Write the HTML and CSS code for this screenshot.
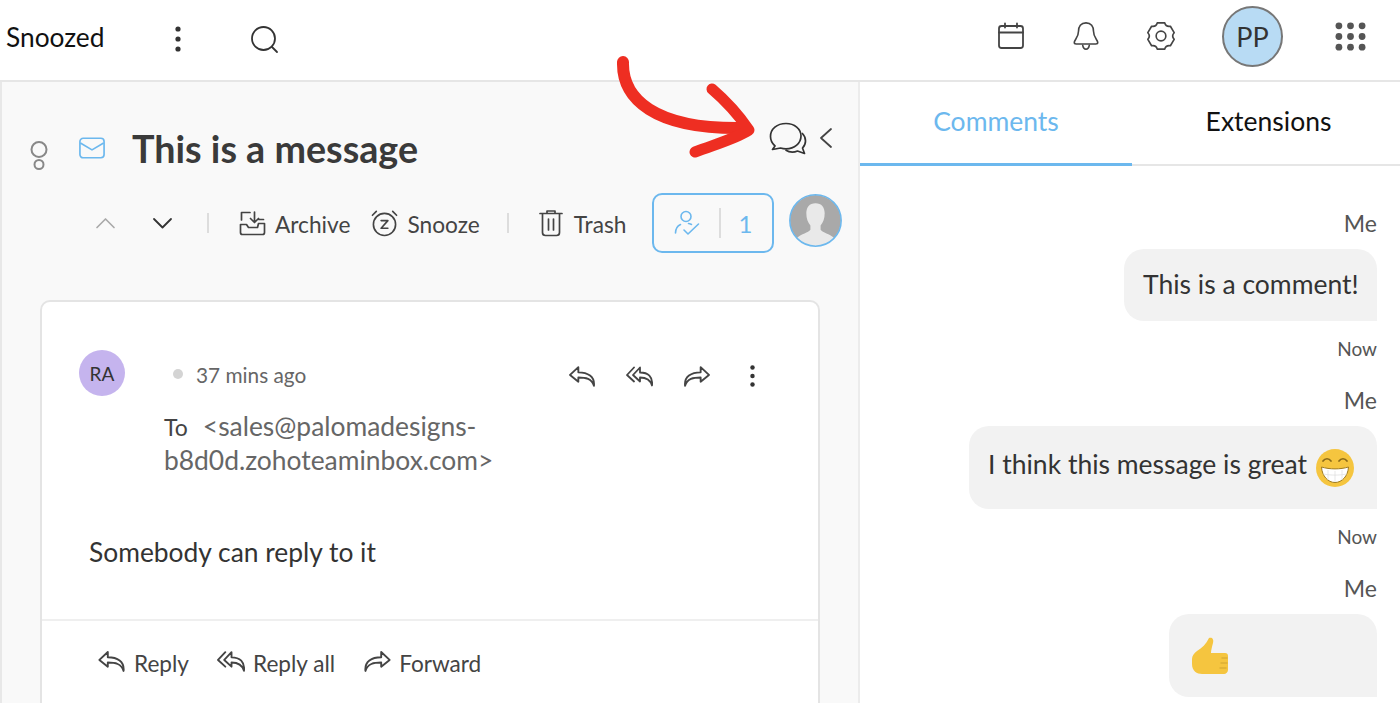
FILE: index.html
```html
<!DOCTYPE html>
<html lang="en">
<head>
<meta charset="utf-8">
<title>Snoozed</title>
<link rel="stylesheet" href="styles.css">
</head>
<body>
<div class="app">
  <header class="topbar">
    <div class="topbar-left">
      <span class="folder">Snoozed</span>
      <svg class="ic-dots" viewBox="0 0 8 28"><circle cx="4" cy="4" r="2.6"/><circle cx="4" cy="14" r="2.6"/><circle cx="4" cy="24" r="2.6"/></svg>
      <svg class="ic-search" viewBox="0 0 28 28" fill="none" stroke="#333" stroke-width="1.8" stroke-linecap="round"><circle cx="12.5" cy="12.5" r="11.5"/><path d="M21 21l5 5"/></svg>
    </div>
    <div class="topbar-right">
      <svg class="ic-top" viewBox="0 0 28 28" fill="none" stroke="#444" stroke-width="1.8" stroke-linecap="round" stroke-linejoin="round"><rect x="2" y="4" width="24" height="22" rx="2.5"/><path d="M2 10.5h24M8 1.5v4M20 1.5v4"/></svg>
      <svg class="ic-top" viewBox="0 0 28 32" fill="none" stroke="#444" stroke-width="1.7" stroke-linecap="round" stroke-linejoin="round"><path d="M14 2c-5.500 0-8 4-8 9 0 7-4.500 9-4.500 12 0 1 .8 1.500 2 1.500h21c1.200 0 2-.5 2-1.500 0-3-4.500-5-4.500-12 0-5-2.500-9-8-9z"/><path d="M10.500 26c.5 3 2 4 3.500 4s3-1 3.500-4"/></svg>
      <svg class="ic-top" viewBox="1 0 28 31" fill="none" stroke="#444" stroke-width="1.7" stroke-linejoin="round"><path d="M11.100 2L18.900 2Q20 6.200 24.700 5.400L28.600 12.100Q25.500 15.500 28.600 18.900L24.700 25.600Q20 24.800 18.900 29L11.100 29Q10 24.800 5.300 25.600L1.400 18.900Q4.500 15.500 1.400 12.100L5.300 5.400Q10 6.200 11.100 2Z"/><circle cx="15" cy="15.500" r="5"/></svg>
      <div class="avatar-pp">PP</div>
      <svg class="ic-grid" viewBox="0 0 32 30"><circle cx="4" cy="4" r="3.500"/><circle cx="16" cy="4" r="3.500"/><circle cx="28" cy="4" r="3.500"/><circle cx="4" cy="15" r="3.500"/><circle cx="16" cy="15" r="3.500"/><circle cx="28" cy="15" r="3.500"/><circle cx="4" cy="26" r="3.500"/><circle cx="16" cy="26" r="3.500"/><circle cx="28" cy="26" r="3.500"/></svg>
    </div>
  </header>

  <main class="panes">
    <section class="thread">
      <div class="title-row">
        <svg class="ic-bulb" viewBox="0 0 18 30" fill="none" stroke="#888" stroke-width="2"><circle cx="9" cy="9.500" r="7.500"/><circle cx="9" cy="24.500" r="4.500"/></svg>
        <svg class="ic-mail" viewBox="0 0 28 24" fill="none" stroke="#6cb8ee" stroke-width="1.800" stroke-linejoin="round"><rect x="1" y="1" width="26" height="21" rx="3.500"/><path d="M1.500 6l12.500 7.500L26.500 6"/></svg>
        <h1 class="subject">This is a message</h1>
        <svg class="ic-chat" viewBox="0 0 38 36" fill="none" stroke="#333" stroke-width="1.700" stroke-linejoin="round"><path d="M17 1.500C8 1.500 1.500 7 1.500 14.500c0 4 1.700 7 4.500 9.500l-2.500 3.500 8-1.500c1.700.5 3.500.8 5.500.8 8.500 0 15-5.600 15-12.800S25.500 1.500 17 1.500z"/><path d="M33 11c2.500 2.500 3.500 5 3.500 8 0 3-1 5-3 7l2 5.500-7-2.500c-3.500 1.500-8 1.500-12-1"/></svg>
        <svg class="ic-back" viewBox="0 0 14 22" fill="none" stroke="#444" stroke-width="1.800" stroke-linecap="round" stroke-linejoin="round"><path d="M12 2L2 11l10 9"/></svg>
      </div>

      <div class="toolbar">
        <svg class="ic-chev dim" viewBox="0 0 20 12" fill="none" stroke-width="1.700" stroke-linecap="round" stroke-linejoin="round"><path d="M1.500 10.500L10 2l8.500 8.500"/></svg>
        <svg class="ic-chev" viewBox="0 0 20 12" fill="none" stroke-width="1.800" stroke-linecap="round" stroke-linejoin="round"><path d="M1.500 2L10 10.500 18.500 2"/></svg>
        <span class="tb-sep first"></span>
        <div class="tb-item archive">
          <svg class="ic-tb wide" viewBox="0 0 27 26" fill="none" stroke="#444" stroke-width="1.700" stroke-linecap="round" stroke-linejoin="round"><path d="M1.500 14.500v8c0 1.200.8 2 2 2h20c1.200 0 2-.8 2-2v-9h-6M1.500 14.500h6l2 3h9l1-4"/><path d="M2.500 10V2.500h8.500M15.500 2v10M11.500 8.500l4 4 4-4M20 9.500h4.500"/></svg>
          <span>Archive</span>
        </div>
        <div class="tb-item snooze">
          <svg class="ic-tb wide" viewBox="0 0 28 28" fill="none" stroke="#444" stroke-width="1.700" stroke-linecap="round" stroke-linejoin="round"><circle cx="14" cy="15.500" r="11.500"/><path d="M10.500 11.500h7l-7 8h7M1.500 6l4-4M26.500 6l-4-4"/></svg>
          <span>Snooze</span>
        </div>
        <span class="tb-sep second"></span>
        <div class="tb-item trash">
          <svg class="ic-tb" viewBox="0 0 24 28" fill="none" stroke="#444" stroke-width="1.700" stroke-linecap="round" stroke-linejoin="round"><path d="M1 4.500h22M8 4.500V2h8v2.500M3.500 4.500v19c0 2 1 3 3 3h11c2 0 3-1 3-3v-19M9.500 10v11M14.500 10v11"/></svg>
          <span>Trash</span>
        </div>
        <div class="assign">
          <svg class="ic-assign" viewBox="0 0 26 26" fill="none" stroke="#6cb8ee" stroke-width="1.600" stroke-linecap="round" stroke-linejoin="round"><circle cx="12" cy="6.500" r="5"/><path d="M1.500 23c0-5 2-7 5-8.500M17.500 14.500c-1-.5-2-1-3-1M10 20l4 4 10.500-10"/></svg>
          <span class="assign-sep"></span>
          <span class="assign-count">1</span>
        </div>
        <svg class="avatar-user" viewBox="0 0 52 52"><circle cx="26" cy="26" r="25" fill="#a9a9a9"/><path d="M26 9c-6 0-9 4-9 10 0 5 1.500 9 4 12v4c-2 3-9 4-13 8 4 5 11 8 18 8s14-3 18-8c-4-4-11-5-13-8v-4c2.500-3 4-7 4-12 0-6-3-10-9-10z" fill="#e9e9e9"/><circle cx="26" cy="26" r="25.200" fill="none" stroke="#6cb8ee" stroke-width="1.500"/></svg>
      </div>

      <article class="card">
        <div class="card-body">
          <div class="avatar-ra">RA</div>
          <div class="meta">
            <div class="meta-top">
              <span class="dot"></span>
              <span class="time">37 mins ago</span>
              <div class="msg-actions">
                <svg class="ic-msg" viewBox="1 1 26 20" fill="none" stroke="#444" stroke-width="1.800" stroke-linecap="round" stroke-linejoin="round"><path d="M10 2L2 9.500 10 16v-4c7 0 13 1 15 8 1-9-6-13-15-13z"/></svg>
                <svg class="ic-msg" viewBox="0 1 27 20" fill="none" stroke="#444" stroke-width="1.800" stroke-linecap="round" stroke-linejoin="round"><path d="M8 2L1 9.500 8 16M14 2L7 9.500 14 16v-4c5 0 10 1 12 8 1-9-4-13-12-13z"/></svg>
                <svg class="ic-msg" viewBox="1 1 26 20" fill="none" stroke="#444" stroke-width="1.800" stroke-linecap="round" stroke-linejoin="round"><path d="M18 2l8 7.500L18 16v-4C11 12 5 13 3 20 2 11 9 7 18 7z"/></svg>
                <svg class="ic-msg-dots" viewBox="0 0 8 28"><circle cx="4" cy="4" r="2.600"/><circle cx="4" cy="14" r="2.600"/><circle cx="4" cy="24" r="2.600"/></svg>
              </div>
            </div>
            <p class="recipients"><span class="to">To</span><span class="addr">&lt;sales@palomadesigns-<br>b8d0d.zohoteaminbox.com&gt;</span></p>
          </div>
        </div>
        <p class="content">Somebody can reply to it</p>
        <div class="card-foot">
          <div class="foot-item">
            <svg class="ic-foot" viewBox="1 1 26 20" fill="none" stroke="#444" stroke-width="1.800" stroke-linecap="round" stroke-linejoin="round"><path d="M10 2L2 9.500 10 16v-4c7 0 13 1 15 8 1-9-6-13-15-13z"/></svg>
            <span>Reply</span>
          </div>
          <div class="foot-item">
            <svg class="ic-foot" viewBox="0 1 27 20" fill="none" stroke="#444" stroke-width="1.800" stroke-linecap="round" stroke-linejoin="round"><path d="M8 2L1 9.500 8 16M14 2L7 9.500 14 16v-4c5 0 10 1 12 8 1-9-4-13-12-13z"/></svg>
            <span>Reply all</span>
          </div>
          <div class="foot-item">
            <svg class="ic-foot" viewBox="1 1 26 20" fill="none" stroke="#444" stroke-width="1.800" stroke-linecap="round" stroke-linejoin="round"><path d="M18 2l8 7.500L18 16v-4C11 12 5 13 3 20 2 11 9 7 18 7z"/></svg>
            <span>Forward</span>
          </div>
        </div>
      </article>
    </section>

    <aside class="side">
      <nav class="tabs">
        <div class="tab active">Comments</div>
        <div class="tab ext">Extensions</div>
      </nav>
      <div class="comments">
        <div class="who">Me</div>
        <div class="bubble b1">This is a comment!</div>
        <div class="when">Now</div>
        <div class="who">Me</div>
        <div class="bubble b2"><span class="b2-text">I think this message is great</span>
          <svg class="emoji" viewBox="0 0 38 38"><circle cx="19" cy="19" r="19" fill="#f5c53f"/><path d="M5.500 18c8 2.500 19 2.500 27 0-.5 9-6.500 15.500-13.500 15.500S6 27 5.500 18z" fill="#fff" stroke="#a07c20" stroke-width="1"/><path d="M12 21v10M19 22v11M26 21v10M7 25c8 1.500 16 1.500 24 0" stroke="#ddd" stroke-width=".7" fill="none"/><path d="M7 12c2-3 6-3 8 0M23 12c2-3 6-3 8 0" fill="none" stroke="#8a6a18" stroke-width="1.700" stroke-linecap="round"/></svg>
        </div>
        <div class="when">Now</div>
        <div class="who">Me</div>
        <div class="bubble b3">
          <svg class="emoji-thumb" viewBox="0 0 36 38"><path d="M17 1c3-1 5 1 4 5-1 4-2 7-2 10h14c2 0 3 1 3 3v14c0 2-2 4-4 4H10C5 37 0 34 0 27v-5c0-3 2-6 5-8 5-3 9-7 12-13z" fill="#f5c53f"/><path d="M35 21h-5M35 26h-6M34 31h-6" stroke="#dcae36" stroke-width="1.500" stroke-linecap="round"/></svg>
        </div>
      </div>
    </aside>
  </main>

  <svg class="annotation" viewBox="0 0 150 110" fill="none" stroke="#ee2e22" stroke-linecap="round" stroke-linejoin="round">
    <path d="M8 6C7 42 38 74 130 72" stroke-width="12"/>
    <path d="M97 33c14 12 26 25 37 41-14 9-33 14-54 22" stroke-width="11"/>
  </svg>
</div>
</body>
</html>
```

FILE: styles.css
```css
* { box-sizing: border-box; }
html, body { margin: 0; padding: 0; }
body { font-family: Lato, "Liberation Sans", sans-serif; color: #333; background: #fff; }
.app { position: relative; width: 1400px; height: 703px; overflow: hidden; display: flex; flex-direction: column; }

.topbar { height: 82px; flex: none; display: flex; align-items: center; justify-content: space-between; border-bottom: 2px solid #e6e6e6; padding: 0 34px 6px 6px; }
.topbar-left, .topbar-right { display: flex; align-items: center; }
.topbar-right { margin-bottom: 2px; }
.folder { font-size: 26.3px; color: #111; width: 168px; }
.ic-dots { width: 8px; height: 28px; fill: #333; margin-top: 4px; }
.ic-search { width: 28px; height: 28px; margin: 6px 0 0 69px; }
.ic-top { width: 28px; height: 30px; margin-right: 47px; }
.avatar-pp { width: 61px; height: 61px; border-radius: 50%; background: #b8dbf4; border: 2px solid #777; margin-right: 52px; display: flex; align-items: center; justify-content: center; font-size: 27px; color: #333; }
.ic-grid { width: 31px; height: 29px; fill: #555; }

.panes { flex: 1; display: flex; min-height: 0; }
.thread { width: 860px; flex: none; background: #f9f9f9; border-left: 2px solid #e8e8e8; border-right: 2px solid #ececec; }
.title-row { display: flex; align-items: center; height: 109px; padding: 24px 0 0 28px; }
.ic-bulb { width: 18px; height: 30px; margin-top: 12px; }
.ic-mail { width: 26px; height: 23px; margin: 0 0 0 31px; }
.subject { margin: 0 0 0 27px; font-size: 37.7px; font-weight: 700; color: #3a3a3a; width: 637px; white-space: nowrap; }
.ic-chat { width: 38px; height: 36px; margin: -18px 0 0 0; }
.ic-back { width: 14px; height: 22px; margin: -22px 0 0 12px; }

.toolbar { display: flex; align-items: center; height: 64px; padding-left: 93px; font-size: 22.7px; color: #444; }
.ic-chev { width: 21px; height: 12px; stroke: #333; margin-right: 36px; }
.ic-chev.dim { stroke: #aaa; }
.tb-sep { width: 2px; height: 20px; background: #ddd; }
.tb-sep.first { margin: 0 30px 0 -2px; }
.tb-sep.second { margin: 0 30px 0 27px; }
.tb-item { display: flex; align-items: center; gap: 9px; white-space: nowrap; }
.tb-item span { padding-top: 2px; }
.trash { gap: 11px; }
.snooze { margin-left: 21px; }
.ic-tb { width: 24px; height: 28px; flex: none; }
.ic-tb.wide { width: 27px; }
.assign { margin-left: 26px; width: 122px; height: 60px; border: 2px solid #6cb8ee; border-radius: 10px; display: flex; align-items: center; padding-left: 20px; color: #6cb8ee; }
.ic-assign { width: 26px; height: 26px; }
.assign-sep { width: 2px; height: 30px; background: #ddd; margin: 0 17px 0 19px; }
.assign-count { font-size: 24px; }
.avatar-user { width: 53px; height: 53px; margin: -6px 0 0 15px; }

.card { margin: 45px 0 0 38px; width: 780px; height: 420px; background: #fff; border: 2px solid #e4e4e4; border-radius: 10px; }
.card-body { display: flex; padding: 48px 0 0 37px; }
.avatar-ra { width: 46px; height: 46px; flex: none; border-radius: 50%; background: #c5b4ee; display: flex; align-items: center; justify-content: center; font-size: 19px; color: #333; }
.meta { margin-left: 39px; flex: 1; }
.meta-top { display: flex; align-items: center; height: 30px; margin-top: 9px; }
.dot { width: 10px; height: 10px; border-radius: 50%; background: #d4d4d4; margin-left: 9px; }
.time { font-size: 20.8px; color: #666; margin-left: 13px; width: 373px; white-space: nowrap; }
.msg-actions { display: flex; align-items: center; gap: 30px; margin-top: 4px; }
.ic-msg { width: 27px; height: 21px; }
.ic-msg-dots { width: 7px; height: 24px; fill: #333; margin: 0 0 0 9px; }
.recipients { margin: 20px 0 0; font-size: 26.4px; line-height: 34px; color: #666; }
.to { font-size: 23px; line-height: 20px; color: #444; margin-right: 15px; }
.content { margin: 57px 0 0 47px; font-size: 26.4px; line-height: 36px; color: #333; }
.card-foot { margin-top: 49px; border-top: 2px solid #efefef; display: flex; align-items: center; padding: 29px 0 0 56px; font-size: 22.6px; color: #444; }
.foot-item { display: flex; align-items: center; gap: 8px; margin-right: 28px; }
.ic-foot { width: 28px; height: 21px; margin-top: -4px; }

.side { flex: 1; min-width: 0; display: flex; flex-direction: column; }
.tabs { display: flex; height: 84px; border-bottom: 2px solid #e6e6e6; font-size: 26.5px; }
.tab { flex: none; display: flex; align-items: center; justify-content: center; color: #111; padding-bottom: 4px; }
.tab.active { color: #6cb8ee; border-bottom: 3px solid #6cb8ee; height: 84px; width: 272px; }
.tab.ext { width: 268px; padding-left: 5px; }
.comments { display: flex; flex-direction: column; align-items: flex-end; padding: 43px 23px 0 0; }
.who { font-size: 23px; color: #555; line-height: 28px; }
.when { font-size: 19px; color: #555; line-height: 24px; margin-top: 16px; margin-bottom: 25px; }
.bubble { margin-top: 12px; background: #f2f2f2; border-radius: 20px 20px 0 20px; font-size: 26.5px; color: #333; display: flex; align-items: center; white-space: nowrap; }
.b1 { height: 72px; padding: 0 19px 2px; width: 253px; }
.b2 { height: 83px; width: 408px; padding: 0 23px 0 19px; justify-content: space-between; }
.b2-text { margin-bottom: 8px; }
.b3 { height: 83px; width: 208px; padding-left: 23px; }
.emoji { width: 38px; height: 38px; flex: none; }
.emoji-thumb { width: 36px; height: 38px; }

.annotation { position: absolute; left: 615px; top: 56px; width: 150px; height: 110px; }
```
